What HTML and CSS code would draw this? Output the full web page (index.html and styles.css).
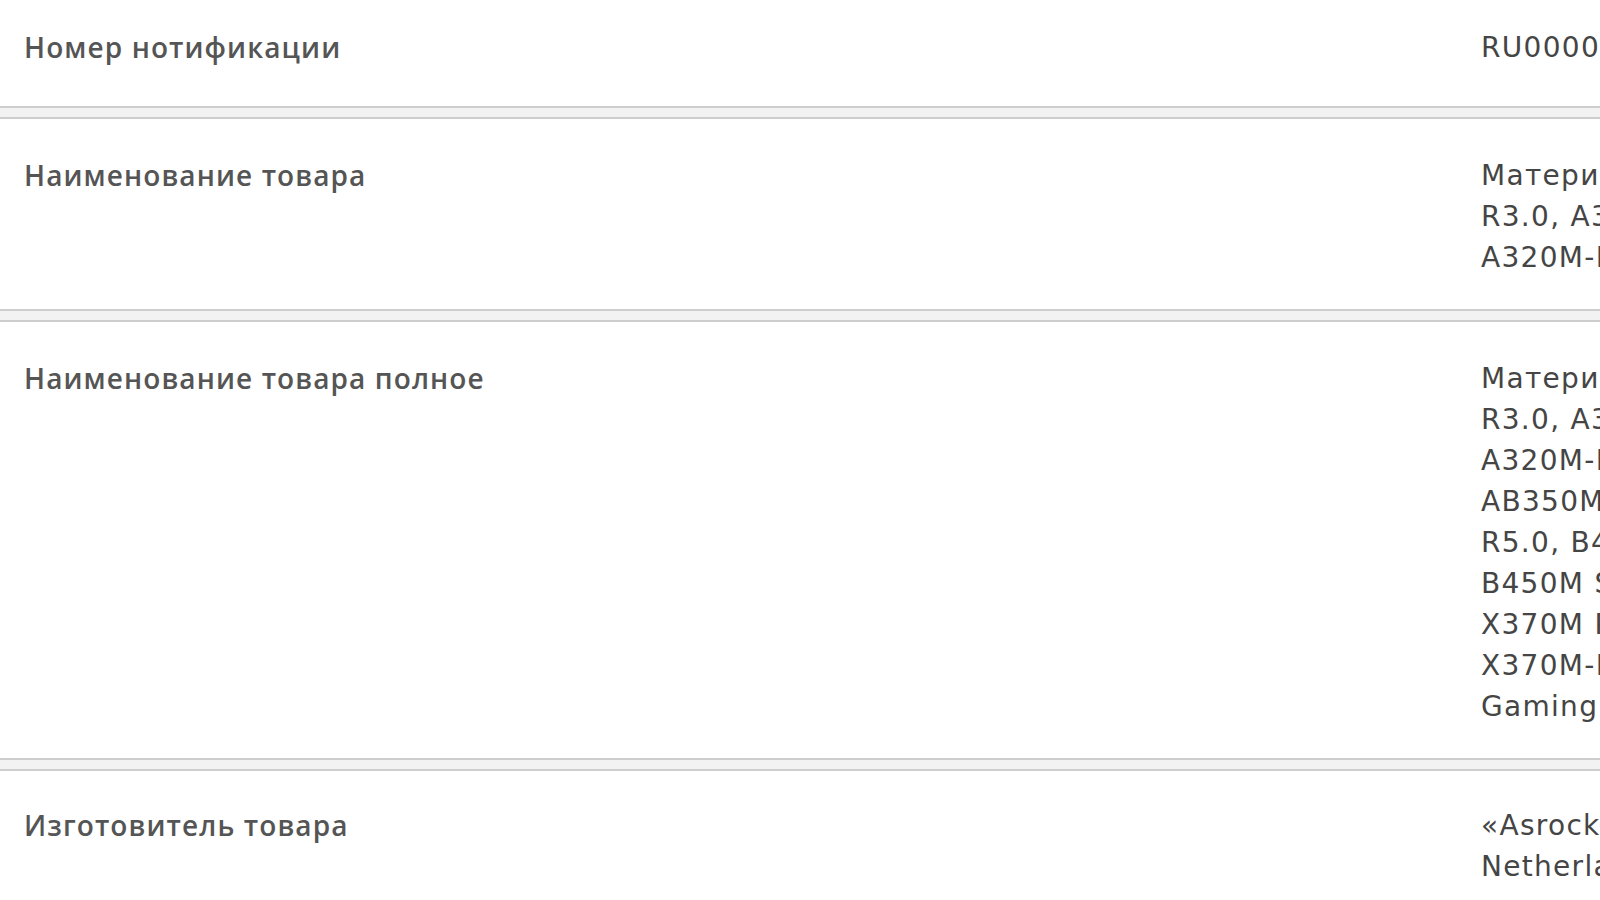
FILE: index.html
```html
<!DOCTYPE html>
<html lang="ru">
<head>
<meta charset="utf-8">
<title>Нотификация</title>
<link rel="stylesheet" href="styles.css">
</head>
<body>
<div class="sheet">
  <div class="row row-first">
    <div class="label">Номер нотификации</div>
    <div class="value">RU0000046839</div>
  </div>
  <div class="sep"></div>
  <div class="row">
    <div class="label">Наименование товара</div>
    <div class="value">Материнские платы ASRock A320M-HDV<br>R3.0, A320M-DGS R3.0, A320M-HD R4.0,<br>A320M-DVS R4.0 и другие</div>
  </div>
  <div class="sep"></div>
  <div class="row">
    <div class="label">Наименование товара полное</div>
    <div class="value">Материнские платы ASRock A320M-HDV<br>R3.0, A320M-DGS R3.0, A320M-HD R4.0,<br>A320M-DVS R4.0, AB350M Pro4 R2.0,<br>AB350M Pro4, AB350M-HDV<br>R5.0, B450M Pro4, B450M-HDV R4.0,<br>B450M Steel Legend, X370 Killer SLI,<br>X370M Pro4, X370 Gaming K4,<br>X370M-HDV, X370 Taichi, X370 Pro4,<br>Gaming ITX/ac</div>
  </div>
  <div class="sep"></div>
  <div class="row row-last">
    <div class="label">Изготовитель товара</div>
    <div class="value">«Asrock Europe B.V.» (Bijsterhuizen 11-11,<br>Netherlands)</div>
  </div>
</div>
</body>
</html>
```

FILE: styles.css
```css
html, body {
  margin: 0;
  padding: 0;
  background: #ffffff;
  overflow: hidden;
}

.sheet {
  width: 2300px;
}

.row {
  display: grid;
  grid-template-columns: 1457px 760px;
  padding: 36px 0 31px 24px;
  font-size: 28px;
  line-height: 41px;
}

.row-first {
  padding-top: 27px;
  padding-bottom: 38px;
}

.row-last {
  padding-top: 34px;
}

.label {
  font-family: "Open Sans", Roboto, sans-serif;
  font-weight: 600;
  color: #555555;
  letter-spacing: 1.1px;
}

.value {
  font-family: "DejaVu Sans", "Liberation Sans", sans-serif;
  color: #454545;
  letter-spacing: 1.3px;
  white-space: nowrap;
}

.sep {
  height: 9px;
  background: #f2f2f2;
  border-top: 2px solid #cdcdcd;
  border-bottom: 2px solid #cdcdcd;
}
```
